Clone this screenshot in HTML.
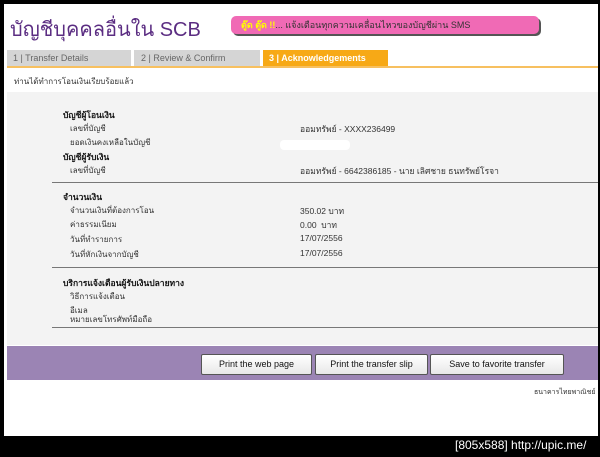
<!DOCTYPE html>
<html><head><meta charset="utf-8"><style>
body{margin:0;width:600px;height:457px;background:#000;position:relative;overflow:hidden;font-family:"Liberation Sans","Noto Sans CJK SC",sans-serif;}
.a{position:absolute}
.w{left:4px;top:4px;width:594px;height:432px;background:#fff}
.t{font-size:8px;color:#333;white-space:nowrap}
.v{font-size:8.5px;color:#333;white-space:nowrap}
.h{font-size:8.5px;font-weight:bold;color:#111;white-space:nowrap}
.btn{position:absolute;top:354px;height:19px;background:linear-gradient(#fff,#e8e8e8);border:1px solid #555;border-radius:2px;font-size:9px;line-height:19px;text-align:center;color:#111}
</style></head><body>
<div class="a w"></div>
<div class="a" style="left:10px;top:13px;font-size:20px;color:#5b2d82">บัญชีบุคคลอื่นใน SCB</div>
<div class="a" style="left:231px;top:16px;width:308px;height:18px;background:#f06ab5;border-radius:5px;box-shadow:2px 2px 0 #555;font-size:9px;line-height:18px;color:#333;text-indent:10px"><b style="color:#ff0">ตู๊ด ตู๊ด !!</b>... แจ้งเตือนทุกความเคลื่อนไหวของบัญชีผ่าน SMS</div>
<div class="a" style="left:7px;top:50px;width:124px;height:17px;background:#d5d5d5;font-size:9px;line-height:17px;color:#666;text-indent:6px">1 | Transfer Details</div>
<div class="a" style="left:134px;top:50px;width:126px;height:17px;background:#d5d5d5;font-size:9px;line-height:17px;color:#666;text-indent:7px">2 | Review &amp; Confirm</div>
<div class="a" style="left:263px;top:50px;width:125px;height:17px;background:#f7a916;font-size:9px;font-weight:bold;line-height:17px;color:#fff;text-indent:6px">3 | Acknowledgements</div>
<div class="a" style="left:7px;top:66px;width:591px;height:2px;background:#f7c060"></div>
<div class="a t" style="left:14px;top:75px">ท่านได้ทำการโอนเงินเรียบร้อยแล้ว</div>
<div class="a" style="left:7px;top:92px;width:591px;height:253px;background:#f3f3f3"></div>
<div class="a h" style="left:63px;top:108px">บัญชีผู้โอนเงิน</div>
<div class="a t" style="left:70px;top:122px">เลขที่บัญชี</div>
<div class="a v" style="left:300px;top:122px">ออมทรัพย์ - XXXX236499</div>
<div class="a t" style="left:70px;top:136px">ยอดเงินคงเหลือในบัญชี</div>
<div class="a" style="left:280px;top:140px;width:70px;height:10px;background:#fff;border-radius:4px"></div>
<div class="a h" style="left:63px;top:150px">บัญชีผู้รับเงิน</div>
<div class="a t" style="left:70px;top:164px">เลขที่บัญชี</div>
<div class="a v" style="left:300px;top:164px">ออมทรัพย์ - 6642386185 - นาย เลิศชาย ธนทรัพย์โรจา</div>
<div class="a" style="left:52px;top:182px;width:546px;height:1px;background:#777"></div>
<div class="a h" style="left:63px;top:190px">จำนวนเงิน</div>
<div class="a t" style="left:70px;top:204px">จำนวนเงินที่ต้องการโอน</div>
<div class="a v" style="left:300px;top:204px">350.02 บาท</div>
<div class="a t" style="left:70px;top:218px">ค่าธรรมเนียม</div>
<div class="a v" style="left:300px;top:218px">0.00 &nbsp;บาท</div>
<div class="a t" style="left:70px;top:233px">วันที่ทำรายการ</div>
<div class="a v" style="left:300px;top:233px">17/07/2556</div>
<div class="a t" style="left:70px;top:248px">วันที่หักเงินจากบัญชี</div>
<div class="a v" style="left:300px;top:248px">17/07/2556</div>
<div class="a" style="left:52px;top:267px;width:546px;height:1px;background:#777"></div>
<div class="a h" style="left:63px;top:276px">บริการแจ้งเตือนผู้รับเงินปลายทาง</div>
<div class="a t" style="left:70px;top:290px">วิธีการแจ้งเตือน</div>
<div class="a t" style="left:70px;top:304px">อีเมล</div>
<div class="a t" style="left:70px;top:313px">หมายเลขโทรศัพท์มือถือ</div>
<div class="a" style="left:52px;top:327px;width:546px;height:1px;background:#777"></div>
<div class="a" style="left:7px;top:346px;width:591px;height:34px;background:#9b84b4"></div>
<div class="btn" style="left:201px;width:109px">Print the web page</div>
<div class="btn" style="left:315px;width:111px">Print the transfer slip</div>
<div class="btn" style="left:430px;width:132px">Save to favorite transfer</div>
<div class="a t" style="left:534px;top:387px;font-size:7px">ธนาคารไทยพาณิชย์</div>
<div class="a" style="left:455px;top:438px;font-size:12px;color:#fff;white-space:nowrap">[805x588] http://upic.me/</div>
</body></html>
